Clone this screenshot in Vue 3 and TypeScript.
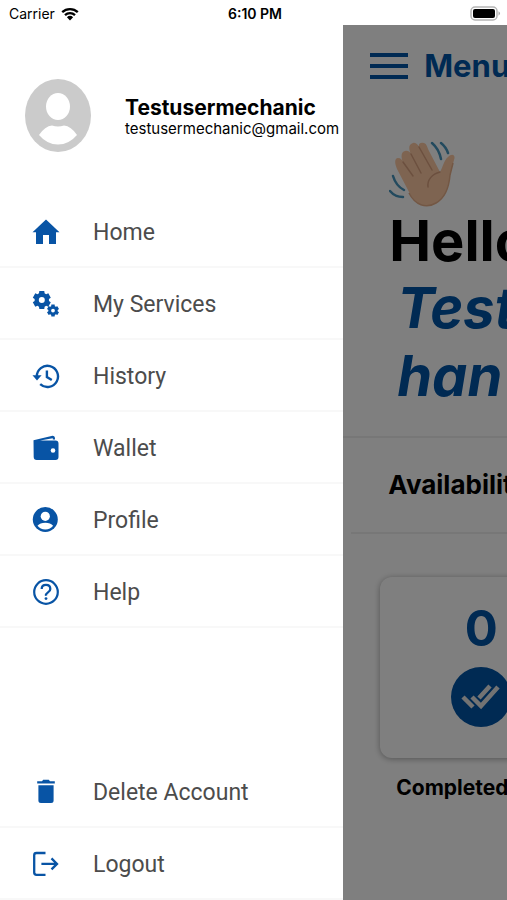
<script setup lang="ts">
interface MenuItem {
  label: string
  icon: string
}

const mainItems: MenuItem[] = [
  { label: 'Home', icon: 'home' },
  { label: 'My Services', icon: 'gears' },
  { label: 'History', icon: 'history' },
  { label: 'Wallet', icon: 'wallet' },
  { label: 'Profile', icon: 'profile' },
  { label: 'Help', icon: 'help' },
]

const accountItems: MenuItem[] = [
  { label: 'Delete Account', icon: 'trash' },
  { label: 'Logout', icon: 'logout' },
]

const groups: MenuItem[][] = [mainItems, accountItems]

// Outline of a six-toothed gear centred on (cx, cy).
function gear(cx: number, cy: number, outer: number, inner: number, hole: number): string {
  const points: string[] = []
  for (let i = 0; i < 6; i++) {
    const mid = (i * Math.PI) / 3 - Math.PI / 2
    const corners: [number, number][] = [
      [-0.4, inner],
      [-0.27, outer],
      [0.27, outer],
      [0.4, inner],
    ]
    for (const [turn, r] of corners) {
      points.push(`${(cx + r * Math.cos(mid + turn)).toFixed(2)} ${(cy + r * Math.sin(mid + turn)).toFixed(2)}`)
    }
  }
  return `M${points.join('L')}ZM${cx - hole} ${cy}a${hole} ${hole} 0 1 0 ${hole * 2} 0a${hole} ${hole} 0 1 0 ${-hole * 2} 0Z`
}

const gears = gear(9.8, 10, 9.3, 7.2, 3) + gear(21, 20.6, 6.2, 4.7, 1.9)
</script>

<template>
  <div class="app">
    <header class="status">
      <span class="carrier">
        Carrier
        <svg class="wifi" viewBox="0 0 18 14" aria-hidden="true">
          <path d="M1.2 5.2a11.2 11.2 0 0 1 15.600 0M4 8.200a7.200 7.200 0 0 1 10 0" fill="none" stroke="#000" stroke-width="2.300" />
          <path d="M5.900 10.300a4.500 4.500 0 0 1 6.200 0L9 13.600Z" />
        </svg>
      </span>
      <span class="time">6:10 PM</span>
      <svg class="battery" viewBox="0 0 31 15" aria-label="Battery full">
        <rect x="1" y="1" width="26" height="13" rx="4" fill="#fff" stroke="#b5b5b5" stroke-width="1.500" />
        <rect x="3" y="3" width="22" height="9" rx="2" />
        <path d="M28.500 5.300q3 2.200 0 4.400Z" fill="#aaa" />
      </svg>
    </header>

    <div class="stage">
      <aside class="drawer">
        <div class="user">
          <svg class="avatar" viewBox="0 0 66 73" preserveAspectRatio="none" aria-hidden="true">
            <ellipse cx="33" cy="36.500" rx="33" ry="36.500" fill="#cbcbcb" />
            <ellipse cx="33" cy="27.500" rx="12" ry="13.500" fill="#fff" />
            <path d="M14 56Q20 47 27 46.500Q33 48.500 39 46.500Q46 47 52 56Q44 65.500 33 65.500T14 56Z" fill="#fff" />
          </svg>
          <div class="identity">
            <strong class="name">Testusermechanic</strong>
            <span class="email">testusermechanic@gmail.com</span>
          </div>
        </div>

        <nav class="menu">
          <ul v-for="(group, index) in groups" :key="index" class="group">
            <li v-for="item in group" :key="item.label">
              <a href="#" class="item">
                <svg class="icon" viewBox="0 0 28 28" aria-hidden="true">
                  <path v-if="item.icon === 'home'" d="M14 1.600 27.500 14.200H24V26H17V17H11V26H4V14.200H.5Z" />
                  <path v-else-if="item.icon === 'gears'" :d="gears" fill-rule="evenodd" />
                  <g v-else-if="item.icon === 'history'">
                    <path class="line" d="M4.800 14.500A10.600 10.600 0 1 1 8.200 22.200M14.900 8.500V15L19.800 18" stroke-width="2.400" />
                    <path d="M.5 13.200H9.600L5 18.600Z" />
                  </g>
                  <g v-else-if="item.icon === 'wallet'">
                    <path d="M1.500 6.200 19.500 1.900Q23 1.300 23 4.800V5.600H20.800V4.300L8 6.600H23.500Q26.500 6.600 26.500 9.600V23Q26.500 26 23.500 26H4.700Q1.700 26 1.700 23Z" />
                    <circle cx="21" cy="16.500" r="2.300" fill="#fff" />
                  </g>
                  <g v-else-if="item.icon === 'profile'">
                    <circle cx="13.300" cy="13.500" r="12.500" />
                    <circle cx="13.300" cy="10.300" r="4.600" fill="#fff" />
                    <path d="M5.500 19.800Q8 16.700 13.300 16.700T21.100 19.800Q18.400 23.500 13.300 23.500T5.500 19.800Z" fill="#fff" />
                  </g>
                  <g v-else-if="item.icon === 'help'">
                    <circle class="line" cx="14" cy="14" r="11.800" stroke-width="2.200" />
                    <path class="line" d="M9.700 10.900Q9.700 6.900 14 6.900T18.300 10.900Q18.300 12.900 16 14.400T14 17.800" stroke-width="2.300" />
                    <circle cx="14" cy="20.600" r="1.400" />
                  </g>
                  <path v-else-if="item.icon === 'trash'" d="M5.200 3.200H10L11.200 1.800H16.800L18 3.200H22.800V5.600H5.200ZM6.400 7.200H21.600V22.500Q21.600 25 19.100 25H8.900Q6.400 25 6.400 22.500Z" />
                  <g v-else>
                    <path class="line" d="M13.500 3H4.500Q2.200 3 2.200 5.300V22.500Q2.200 24.800 4.500 24.800H13.500M9.400 13.900H25M19.500 8.400 25 13.900 19.500 19.400" stroke-width="2.300" />
                  </g>
                </svg>
                <span>{{ item.label }}</span>
              </a>
            </li>
          </ul>
        </nav>
      </aside>

      <main class="screen">
        <button class="toggle" type="button">
          <svg class="bars" viewBox="0 0 38 26" aria-hidden="true">
            <path d="M0 0H38V4H0ZM0 11H38V15H0ZM0 22H38V26H0Z" />
          </svg>
          <span>Menu</span>
        </button>

        <section class="greeting">
          <svg class="wave" viewBox="0 0 66 68" aria-hidden="true">
            <path d="M20 52 8 29C5 22 6 18 9 18C12 18 13 20 14 22C11 16 13 11 16 11C19 10 21 12 22 14C19 8 20 4 24 3C27 2 29 5 30 7C29 3 32 2 35 3C38 4 38 7 40 11L51 32C54 27 55 20 59 17C63 13 67 15 65 20L61 35C60 47 56 58 47 63C37 69 25 64 20 52Z" fill="#fcc9a3" />
            <path d="M14 22 24 36M22 14 32 33M30 7 43 30M51 32C43 34 38 40 39 47" fill="none" stroke="#d9a07e" stroke-width="1.500" stroke-linecap="round" />
            <path d="M20 53C26 65 37 69 47 63C56 58 60 47 61 35L64 23" fill="none" stroke="#e6ae88" stroke-width="1.500" />
            <path d="M43 3Q50 9 52 19M52 3Q57 7 59 13M4 36Q7 46 15 50M1 51Q6 57 14 57" fill="none" stroke="#4795bd" stroke-width="2.500" stroke-linecap="round" />
          </svg>
          <h1 class="hello">Hello</h1>
          <p class="who">Test<br />han</p>
        </section>

        <h2 class="availability">Availability</h2>

        <section class="stats">
          <div class="card">
            <span class="count">0</span>
            <svg class="badge" viewBox="0 0 60 60" aria-hidden="true">
              <circle cx="30" cy="30" r="30" fill="#0054a6" />
              <path d="M12 30 22 40M21 30 30 39 47 20M28 31 39 19" fill="none" stroke="#e6e6e6" stroke-width="4.500" />
            </svg>
          </div>
          <h3 class="caption">Completed</h3>
        </section>
      </main>
    </div>
  </div>
</template>

<style>
body {
  margin: 0;
}
</style>

<style scoped>
.app {
  display: flex;
  flex-direction: column;
  min-height: 100vh;
  overflow: hidden;
  background: #fff;
  color: #000;
  font-family: Inter, "Liberation Sans", sans-serif;
}

.status {
  display: grid;
  grid-template-columns: 1fr auto 1fr;
  align-items: center;
  height: 25px;
  padding: 2px 6px 0 9px;
  box-sizing: border-box;
  font-size: 14px;
}

.carrier {
  display: flex;
  align-items: center;
  gap: 6px;
}

.wifi {
  width: 18px;
  height: 14px;
}

.time {
  font-weight: 600;
}

.battery {
  width: 31px;
  height: 15px;
  justify-self: end;
}

.stage {
  display: flex;
  flex: 1;
}

.drawer {
  display: flex;
  flex: 0 0 67.7%;
  flex-direction: column;
  min-width: 0;
}

.user {
  display: flex;
  align-items: center;
  gap: 34px;
  height: 171px;
  padding: 10px 0 0 25px;
  box-sizing: border-box;
}

.avatar {
  flex: none;
  width: 66px;
  height: 73px;
}

.identity {
  display: flex;
  flex-direction: column;
  padding-top: 4px;
  white-space: nowrap;
}

.name {
  font-size: 21px;
  line-height: 22px;
}

.email {
  font-size: 15px;
  font-variation-settings: "opsz" 32;
  line-height: 20px;
}

.menu {
  display: flex;
  flex: 1;
  flex-direction: column;
  justify-content: space-between;
}

.group {
  margin: 0;
  padding: 0;
  list-style: none;
}

.item {
  display: flex;
  align-items: center;
  gap: 33px;
  height: 72px;
  padding: 2px 0 0 32px;
  box-sizing: border-box;
  border-bottom: 2px solid #f8f8f8;
  color: #4c4c4c;
  font-family: Roboto, Inter, sans-serif;
  font-size: 23px;
  text-decoration: none;
}

.icon {
  width: 28px;
  height: 28px;
  fill: #0854a5;
}

.line {
  fill: none;
  stroke: #0854a5;
}

.screen {
  position: relative;
  flex: 1;
  min-width: 0;
  overflow: hidden;
  white-space: nowrap;
}

.screen::after {
  position: absolute;
  inset: 0;
  background: rgba(0, 0, 0, 0.5);
  content: "";
}

.toggle {
  display: flex;
  align-items: center;
  gap: 16px;
  height: 81px;
  padding: 0 0 0 27px;
  border: 0;
  background: none;
  color: #0054a6;
  font-family: inherit;
  font-size: 31px;
  font-weight: 700;
}

.bars {
  flex: none;
  width: 38px;
  height: 26px;
  fill: #0054a6;
}

.greeting {
  height: 332px;
  padding: 34px 0 0 46px;
  box-sizing: border-box;
  border-bottom: 2px solid #eee;
}

.wave {
  display: block;
  width: 66px;
  height: 68px;
}

.hello {
  margin: 0;
  font-size: 56px;
  line-height: 66px;
}

.who {
  margin: 0;
  padding-left: 8px;
  color: #0054a6;
  font-size: 56px;
  font-style: italic;
  font-weight: 700;
  line-height: 68px;
}

.availability {
  margin: 0 0 0 8px;
  padding-left: 37px;
  border-bottom: 2px solid #eee;
  font-size: 26px;
  line-height: 94px;
}

.stats {
  display: flex;
  flex-direction: column;
  align-items: flex-start;
  gap: 18px;
  padding: 43px 0 0 37px;
}

.card {
  display: flex;
  flex-direction: column;
  align-items: center;
  gap: 8px;
  width: 202px;
  height: 181px;
  padding-top: 22px;
  box-sizing: border-box;
  border-radius: 12px;
  background: #fff;
  box-shadow: 0 1px 6px rgba(0, 0, 0, 0.35);
}

.count {
  color: #0054a6;
  font-size: 49px;
  font-weight: 700;
  line-height: 60px;
}

.badge {
  width: 60px;
  height: 60px;
}

.caption {
  margin: 0;
  padding-left: 16px;
  font-size: 21px;
  line-height: 24px;
}
</style>
